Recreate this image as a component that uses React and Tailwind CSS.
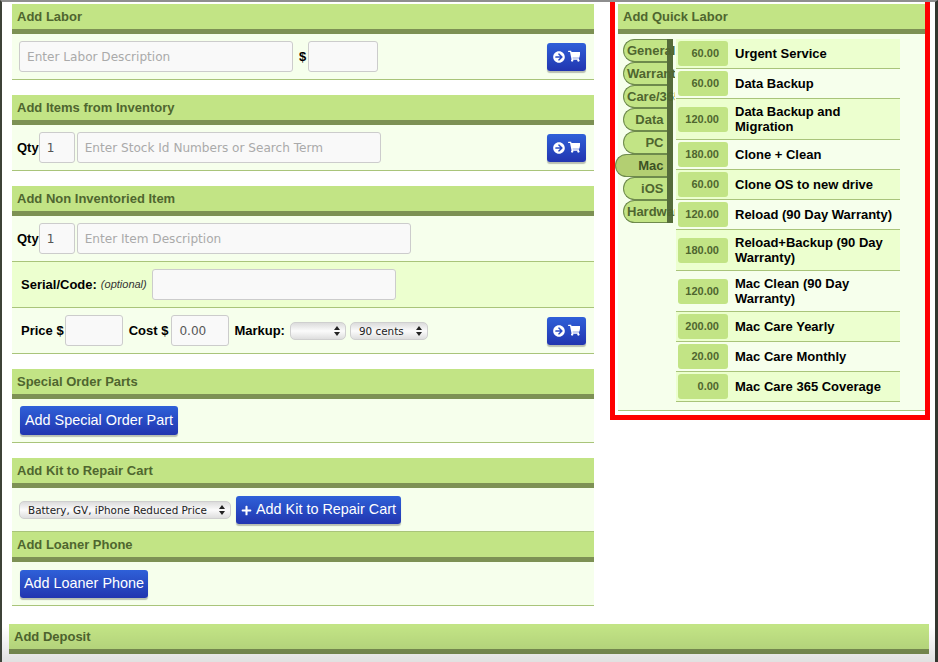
import React from "react";
import { FaArrowCircleRight, FaShoppingCart, FaPlus } from "react-icons/fa";

const sans = "font-['Liberation_Sans',Arial,sans-serif]";
const verdana = "font-['DejaVu_Sans',Verdana,sans-serif]";

const tabs = [
  { name: "General" },
  { name: "Warranty" },
  { name: "Care/365" },
  { name: "Data" },
  { name: "PC" },
  { name: "Mac", active: true },
  { name: "iOS" },
  { name: "Hardware" },
];

const labors = [
  { price: "60.00", name: "Urgent Service" },
  { price: "60.00", name: "Data Backup" },
  { price: "120.00", name: "Data Backup and Migration" },
  { price: "180.00", name: "Clone + Clean" },
  { price: "60.00", name: "Clone OS to new drive" },
  { price: "120.00", name: "Reload (90 Day Warranty)" },
  { price: "180.00", name: "Reload+Backup (90 Day Warranty)" },
  { price: "120.00", name: "Mac Clean (90 Day Warranty)" },
  { price: "200.00", name: "Mac Care Yearly" },
  { price: "20.00", name: "Mac Care Monthly" },
  { price: "0.00", name: "Mac Care 365 Coverage" },
];

const Header = ({ title }) => (
  <div className="h-[30px] bg-[#c2e485] border-b-[5px] border-[#7d9154] pl-[5px] flex items-center text-[13px] font-bold text-[#4f662f]">
    {title}
  </div>
);

const Field = ({ className, ...props }) => (
  <input
    {...props}
    className={`h-[31px] shrink-0 bg-[#f9f9f9] border border-[#cccccc] rounded-[3px] px-[7px] text-[12.1px] text-[#555555] placeholder:text-[#aaaaaa] ${verdana} ${className}`}
  />
);

const BlueButton = ({ className, children }) => (
  <button className={`bg-gradient-to-b from-[#2f60d8] to-[#2235b0] rounded-[3px] text-white text-[14.4px] shadow-[0_2px_1px_rgba(0,0,0,0.25)] flex items-center justify-center ${className}`}>
    {children}
  </button>
);

const CartButton = () => (
  <BlueButton className="w-[39px] h-[28px] gap-[3px] ml-auto mr-[8px]">
    <FaArrowCircleRight className="text-[12px]" />
    <FaShoppingCart className="text-[12.5px]" />
  </BlueButton>
);

const Select = ({ className, children }) => (
  <div className={`relative h-[18px] shrink-0 ${className}`}>
    <select className={`block appearance-none w-full h-full pl-[8px] pt-[1px] rounded-[5px] border border-[#cfcfcf] bg-gradient-to-b from-[#dcdcdc] via-[#fbfbfb] to-[#dedede] text-[10.4px] text-[#222222] ${verdana}`}>
      {children}
    </select>
    <svg className="absolute right-[6px] top-[4px] pointer-events-none" width="6" height="10" viewBox="0 0 6 10">
      <path d="M3 0L6 4H0Z M3 10L0 6H6Z" fill="#222222" />
    </svg>
  </div>
);

const Row = ({ className = "", children }) => (
  <div className={`border-b border-[#a9c47a] flex items-center ${className}`}>{children}</div>
);

const Label = ({ className = "", children }) => (
  <span className={`text-[13px] font-bold text-black shrink-0 ${className}`}>{children}</span>
);

export default function App() {
  return (
    <div className={`relative w-[938px] h-[662px] overflow-hidden bg-white border-t-2 border-t-[#8e8e8e] border-l-2 border-l-[#3d4238] border-r-[3px] border-r-[#33362f] ${sans}`}>
      <div className="flex items-start">
        <div className="w-[582px] ml-[10px] pt-[2px] shrink-0">
          <Header title="Add Labor" />
          <Row className="h-[46px] bg-[#f6ffec] pl-[7px]">
            <Field className="w-[274px]" placeholder="Enter Labor Description" />
            <Label className="ml-[6px] mr-[2px]">$</Label>
            <Field className="w-[70px]" />
            <CartButton />
          </Row>

          <div className="mt-[15px]">
            <Header title="Add Items from Inventory" />
            <Row className="h-[46px] bg-[#f6ffec] pl-[5px]">
              <Label>Qty</Label>
              <Field className="w-[36px]" defaultValue="1" />
              <Field className="w-[304px] ml-[2px]" placeholder="Enter Stock Id Numbers or Search Term" />
              <CartButton />
            </Row>
          </div>

          <div className="mt-[15px]">
            <Header title="Add Non Inventoried Item" />
            <Row className="h-[46px] bg-[#f6ffec] pl-[5px]">
              <Label>Qty</Label>
              <Field className="w-[36px]" defaultValue="1" />
              <Field className="w-[334px] ml-[2px]" placeholder="Enter Item Description" />
            </Row>
            <Row className="h-[46px] bg-[#ecffcf] pl-[9px]">
              <Label>Serial/Code:</Label>
              <span className="ml-[4px] text-[11px] italic text-[#333333]">(optional)</span>
              <Field className="w-[244px] ml-[5px]" />
            </Row>
            <Row className="h-[46px] bg-[#f6ffec] pl-[9px]">
              <Label>Price $</Label>
              <Field className="w-[58px] ml-[1px]" />
              <Label className="ml-[6px]">Cost $</Label>
              <Field className="w-[58px] ml-[3px]" defaultValue="0.00" />
              <Label className="ml-[5px]">Markup:</Label>
              <Select className="w-[56px] ml-[5px]">
                <option></option>
              </Select>
              <Select className="w-[78px] ml-[4px]">
                <option>90 cents</option>
              </Select>
              <CartButton />
            </Row>
          </div>

          <div className="mt-[15px]">
            <Header title="Special Order Parts" />
            <Row className="h-[44px] bg-[#f6ffec] pl-[8px]">
              <BlueButton className="w-[158px] h-[29px] pt-[1px]">Add Special Order Part</BlueButton>
            </Row>
          </div>

          <div className="mt-[15px]">
            <Header title="Add Kit to Repair Cart" />
            <Row className="h-[44px] bg-[#f6ffec] pl-[7px]">
              <Select className="w-[212px] mt-[1px]">
                <option>Battery, GV, iPhone Reduced Price</option>
              </Select>
              <BlueButton className="w-[165px] h-[28px] ml-[5px] gap-[4px] pt-[1px]">
                <FaPlus className="text-[11px]" /> Add Kit to Repair Cart
              </BlueButton>
            </Row>
            <Header title="Add Loaner Phone" />
            <Row className="h-[44px] bg-[#f6ffec] pl-[8px]">
              <BlueButton className="w-[128px] h-[28px] pt-[1px]">Add Loaner Phone</BlueButton>
            </Row>
          </div>
        </div>

        {/* quick labor panel, marked up in red */}
        <div className="w-[320px] h-[420px] ml-[16px] -mt-[2px] shrink-0 border-[5px] border-t-0 border-[#fe0000] pl-[3px] pt-[4px]">
          <Header title="Add Quick Labor" />
          <div className="h-[377px] bg-[#f6ffec] border-b border-[#a9c47a] pt-[5px] flex items-start">
            <div className="w-[60px] -ml-[3px] pl-[8px] overflow-hidden shrink-0">
              <div className="w-[50px] border-r-[6px] border-[#556b3a]">
                {tabs.map((t) => (
                  <div
                    key={t.name}
                    className={`h-[23px] leading-[21px] border border-r-0 border-[#6e8a4c] rounded-l-[12px] pl-[3px] pr-[3.5px] text-right whitespace-nowrap text-[13px] font-bold ${
                      t.active ? "-ml-[8px] bg-[#b3cf72] text-[#3d5224]" : "bg-[#c2e485] text-[#4f662f]"
                    }`}
                  >
                    {t.name}
                  </div>
                ))}
              </div>
            </div>
            <div className="w-[224px] ml-[1px] shrink-0">
              {labors.map((l, i) => (
                <div
                  key={l.name}
                  className={`min-h-[30px] py-[5px] flex items-center border-b border-[#a9c47a] ${
                    i % 2 === 0 ? "bg-[#ecffcf]" : "bg-[#f6ffec]"
                  }`}
                >
                  <div className="w-[50px] h-[25px] -my-[5px] ml-[2px] shrink-0 bg-[#c2e485] rounded-[3px] flex items-center justify-end pr-[9px] text-[11px] font-bold text-[#4f662f]">
                    {l.price}
                  </div>
                  <div className="ml-[7px] w-[160px] text-[13px] leading-[15px] font-bold text-black">{l.name}</div>
                </div>
              ))}
            </div>
          </div>
        </div>
      </div>

      <div className="w-[920px] ml-[7px] mt-[18px]">
        <Header title="Add Deposit" />
      </div>

      {/* window fade at the bottom edge */}
      <div className="absolute left-0 right-0 bottom-0 h-[36px] bg-gradient-to-b from-transparent to-black/12 pointer-events-none" />
    </div>
  );
}
